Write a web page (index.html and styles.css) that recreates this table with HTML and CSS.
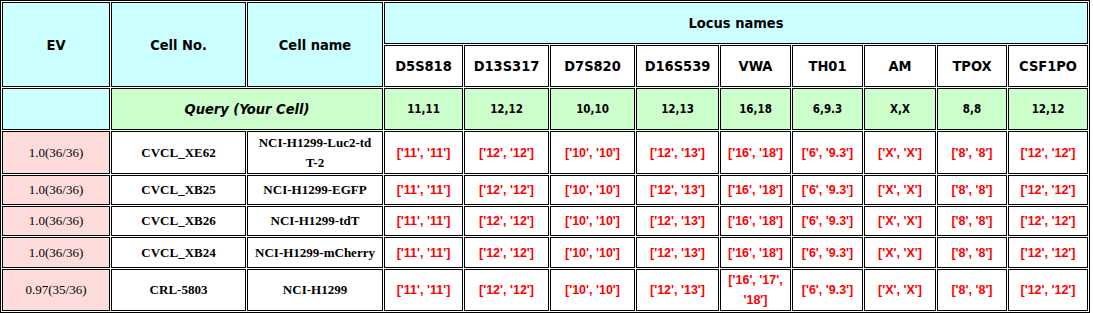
FILE: index.html
```html
<!DOCTYPE html>
<html>
<head>
<meta charset="utf-8">
<title>STR match</title>
<link rel="stylesheet" href="styles.css">
</head>
<body>
<table class="str">
  <colgroup>
    <col class="c-ev"><col class="c-no"><col class="c-name">
    <col class="c-d5"><col class="c-d13"><col class="c-d7"><col class="c-d16">
    <col class="c-vwa"><col class="c-th"><col class="c-am"><col class="c-tpox"><col class="c-csf">
  </colgroup>
  <thead>
    <tr class="r-head1">
      <th class="hd" rowspan="2">EV</th>
      <th class="hd" rowspan="2">Cell No.</th>
      <th class="hd" rowspan="2">Cell name</th>
      <th class="hd" colspan="9">Locus names</th>
    </tr>
    <tr class="r-head2">
      <th class="locus">D5S818</th>
      <th class="locus">D13S317</th>
      <th class="locus">D7S820</th>
      <th class="locus">D16S539</th>
      <th class="locus">VWA</th>
      <th class="locus">TH01</th>
      <th class="locus">AM</th>
      <th class="locus">TPOX</th>
      <th class="locus">CSF1PO</th>
    </tr>
    <tr class="r-query">
      <th class="hd"></th>
      <th class="qlabel" colspan="2">Query (Your Cell)</th>
      <td class="qv">11,11</td>
      <td class="qv">12,12</td>
      <td class="qv">10,10</td>
      <td class="qv">12,13</td>
      <td class="qv">16,18</td>
      <td class="qv">6,9.3</td>
      <td class="qv">X,X</td>
      <td class="qv">8,8</td>
      <td class="qv">12,12</td>
    </tr>
  </thead>
  <tbody>
    <tr class="r-tall">
      <td class="ev">1.0(36/36)</td>
      <td class="cell">CVCL_XE62</td>
      <td class="cell">NCI-H1299-Luc2-td<br>T-2</td>
      <td class="val">['11', '11']</td>
      <td class="val">['12', '12']</td>
      <td class="val">['10', '10']</td>
      <td class="val">['12', '13']</td>
      <td class="val">['16', '18']</td>
      <td class="val">['6', '9.3']</td>
      <td class="val">['X', 'X']</td>
      <td class="val">['8', '8']</td>
      <td class="val">['12', '12']</td>
    </tr>
    <tr class="r-one">
      <td class="ev">1.0(36/36)</td>
      <td class="cell">CVCL_XB25</td>
      <td class="cell">NCI-H1299-EGFP</td>
      <td class="val">['11', '11']</td>
      <td class="val">['12', '12']</td>
      <td class="val">['10', '10']</td>
      <td class="val">['12', '13']</td>
      <td class="val">['16', '18']</td>
      <td class="val">['6', '9.3']</td>
      <td class="val">['X', 'X']</td>
      <td class="val">['8', '8']</td>
      <td class="val">['12', '12']</td>
    </tr>
    <tr class="r-one">
      <td class="ev">1.0(36/36)</td>
      <td class="cell">CVCL_XB26</td>
      <td class="cell">NCI-H1299-tdT</td>
      <td class="val">['11', '11']</td>
      <td class="val">['12', '12']</td>
      <td class="val">['10', '10']</td>
      <td class="val">['12', '13']</td>
      <td class="val">['16', '18']</td>
      <td class="val">['6', '9.3']</td>
      <td class="val">['X', 'X']</td>
      <td class="val">['8', '8']</td>
      <td class="val">['12', '12']</td>
    </tr>
    <tr class="r-one2">
      <td class="ev">1.0(36/36)</td>
      <td class="cell">CVCL_XB24</td>
      <td class="cell">NCI-H1299-mCherry</td>
      <td class="val">['11', '11']</td>
      <td class="val">['12', '12']</td>
      <td class="val">['10', '10']</td>
      <td class="val">['12', '13']</td>
      <td class="val">['16', '18']</td>
      <td class="val">['6', '9.3']</td>
      <td class="val">['X', 'X']</td>
      <td class="val">['8', '8']</td>
      <td class="val">['12', '12']</td>
    </tr>
    <tr class="r-two">
      <td class="ev">0.97(35/36)</td>
      <td class="cell">CRL-5803</td>
      <td class="cell">NCI-H1299</td>
      <td class="val">['11', '11']</td>
      <td class="val">['12', '12']</td>
      <td class="val">['10', '10']</td>
      <td class="val">['12', '13']</td>
      <td class="val">['16', '17',<br>'18']</td>
      <td class="val">['6', '9.3']</td>
      <td class="val">['X', 'X']</td>
      <td class="val">['8', '8']</td>
      <td class="val">['12', '12']</td>
    </tr>
  </tbody>
</table>
</body>
</html>
```

FILE: styles.css
```css
html, body {
  margin: 0;
  padding: 0;
  background: #ffffff;
}

.str {
  table-layout: fixed;
  width: 1090px;
  border: 1px solid #000;
  border-collapse: separate;
  border-spacing: 1px;
  background: #ffffff;
}

.c-ev { width: 108px; }
.c-no { width: 135px; }
.c-name { width: 136px; }
.c-d5 { width: 79px; }
.c-d13 { width: 85px; }
.c-d7 { width: 85px; }
.c-d16 { width: 83px; }
.c-vwa { width: 71px; }
.c-th { width: 71px; }
.c-am { width: 72px; }
.c-tpox { width: 70px; }
.c-csf { width: 80px; }

.str th,
.str td {
  border: 1px solid #000;
  padding: 0;
  text-align: center;
  vertical-align: middle;
  box-sizing: border-box;
  line-height: 20px;
}

.r-head1 { height: 42px; }
.r-head2 { height: 42px; }
.r-query { height: 42px; }
.r-tall { height: 43px; }
.r-one { height: 30px; }
.r-one2 { height: 31px; }
.r-two { height: 42px; }

.hd {
  background: #ccffff;
  color: #000;
  font-family: "DejaVu Sans Condensed", "DejaVu Sans", sans-serif;
  font-weight: bold;
  font-size: 14.5px;
}

.locus {
  background: #ffffff;
  color: #000;
  font-family: "DejaVu Sans Condensed", "DejaVu Sans", sans-serif;
  font-weight: bold;
  font-size: 14.5px;
}

.qlabel {
  background: #ccffcc;
  color: #000;
  font-family: "DejaVu Sans Condensed", "DejaVu Sans", sans-serif;
  font-weight: bold;
  font-style: italic;
  font-size: 14.5px;
}

.qv {
  background: #ccffcc;
  color: #000;
  font-family: "DejaVu Sans Condensed", "DejaVu Sans", sans-serif;
  font-weight: bold;
  font-size: 11.5px;
}

.ev {
  background: #ffdcdc;
  color: #000;
  font-family: "Liberation Serif", "Times New Roman", serif;
  font-size: 13px;
}

.cell {
  background: #ffffff;
  color: #000;
  font-family: "Liberation Serif", "Times New Roman", serif;
  font-weight: bold;
  font-size: 13px;
}

.val {
  background: #ffffff;
  color: #ff0000;
  font-family: "Liberation Sans", Arial, sans-serif;
  font-weight: bold;
  font-size: 12.5px;
}
```
